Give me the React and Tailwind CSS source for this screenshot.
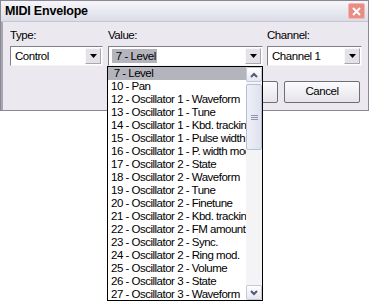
import React from 'react';

const items = [
    ' 7 - Level',
    '10 - Pan',
    '12 - Oscillator 1 - Waveform',
    '13 - Oscillator 1 - Tune',
    '14 - Oscillator 1 - Kbd. tracking',
    '15 - Oscillator 1 - Pulse width',
    '16 - Oscillator 1 - P. width mod',
    '17 - Oscillator 2 - State',
    '18 - Oscillator 2 - Waveform',
    '19 - Oscillator 2 - Tune',
    '20 - Oscillator 2 - Finetune',
    '21 - Oscillator 2 - Kbd. tracking',
    '22 - Oscillator 2 - FM amount',
    '23 - Oscillator 2 - Sync.',
    '24 - Oscillator 2 - Ring mod.',
    '25 - Oscillator 2 - Volume',
    '26 - Oscillator 3 - State',
    '27 - Oscillator 3 - Waveform',
];

const ArrowDown = () => (
    <svg width="7" height="4" viewBox="0 0 7 4">
        <path d="M0 0h7L3.5 4z" fill="#000" />
    </svg>
);

// sunken field: dark top/left edge, light bottom/right edge
const Combo = ({ width, value, selected }) => (
    <div className={`${width} h-[20px] bg-white border border-t-[#808088] border-l-[#808088] border-r-[#f4f4f6] border-b-[#f4f4f6] flex items-center p-[1px]`}>
        <div className="flex-1 h-full flex items-center pl-[2px]">
            <span className={`whitespace-pre px-[1px] leading-[14px] ${selected ? 'bg-[#b4b4bc]' : ''}`}>{value}</span>
        </div>
        <div className="w-[16px] h-full bg-[#e4e2e8] border border-[#f8f8fa] border-r-[#a9a7ae] border-b-[#a9a7ae] flex items-center justify-center">
            <ArrowDown />
        </div>
    </div>
);

const Button = ({ children, width }) => (
    <div className={`${width} h-[22px] border border-[#6e6e76] rounded-[2px] bg-gradient-to-b from-[#fbfbfd] to-[#e6e4ea] flex items-center justify-center`}>
        {children}
    </div>
);

const ScrollBtn = ({ up }) => (
    <div className="h-[15px] border border-[#c7cad6] rounded-[2px] bg-gradient-to-b from-[#ffffff] to-[#e6e6ee] flex items-center justify-center">
        <svg width="8" height="6" viewBox="0 0 8 6">
            <path d={up ? 'M1 5L4 2L7 5' : 'M1 1L4 4L7 1'} stroke="#4d5a78" strokeWidth="2" fill="none" />
        </svg>
    </div>
);

const App = () => {
    return (
        <div className="w-[369px] h-[303px] bg-white relative overflow-hidden text-[11.5px] tracking-[-0.45px] text-black" style={{ fontFamily: '"Liberation Sans", Arial, sans-serif' }}>
            {/* window */}
            <div className="w-[369px] h-[111px] border border-[#8a8894] bg-[#ebe8f0] flex flex-col">
                <div className="h-[21px] bg-gradient-to-b from-[#f6f6fa] to-[#dcdce8] flex items-center justify-between pl-[4px] pr-[3px] border-b border-[#c6c5d0]">
                    <span className="font-bold text-[12.5px] tracking-[-0.2px]">MIDI Envelope</span>
                    <div className="w-[17px] h-[16px] rounded-[2px] bg-[#e98c84] border border-[#f3b8b2] flex items-center justify-center">
                        <svg width="9" height="9" viewBox="0 0 9 9">
                            <path d="M1 1L8 8M8 1L1 8" stroke="#fff" strokeWidth="2" />
                        </svg>
                    </div>
                </div>
                <div className="flex-1 border-l-[2px] border-[#a7a6b0] pl-[7px] pr-[6px] pt-[6px]">
                    <div className="flex gap-[4px]">
                        <div className="flex flex-col gap-[4px]">
                            <span className="leading-[14px]">Type:</span>
                            <Combo width="w-[93px]" value="Control" />
                        </div>
                        <div className="flex flex-col gap-[4px] ml-[1px]">
                            <span className="leading-[14px]">Value:</span>
                            <Combo width="w-[155px]" value=" 7 - Level" selected />
                        </div>
                        <div className="flex flex-col gap-[4px]">
                            <span className="leading-[14px]">Channel:</span>
                            <Combo width="w-[95px]" value="Channel 1" />
                        </div>
                    </div>
                    <div className="flex justify-end gap-[6px] mt-[15px] pr-[2px]">
                        <Button width="w-[74px]">OK</Button>
                        <Button width="w-[76px]">Cancel</Button>
                    </div>
                </div>
            </div>

            {/* open dropdown list */}
            <div className="absolute left-[107px] top-[66px] w-[156px] h-[235px] bg-white border border-black flex tracking-[-0.5px]">
                <div className="flex-1 overflow-hidden">
                    {items.map((item, i) => (
                        <div key={i} className={`h-[13px] leading-[13px] whitespace-pre pl-[3px] ${i === 0 ? 'bg-[#b4b4bc]' : ''}`}>
                            {item}
                        </div>
                    ))}
                </div>
                <div className="w-[16px] bg-[#f4f3f6] flex flex-col">
                    <ScrollBtn up />
                    <div className="mt-[2px] h-[66px] border border-[#b8c0d6] rounded-[2px] bg-gradient-to-r from-[#eef0f8] to-[#dfe2ee] flex items-center justify-center">
                        <div className="flex flex-col gap-[1px]">
                            <div className="w-[7px] h-[1px] bg-[#8d95b0]" />
                            <div className="w-[7px] h-[1px] bg-[#8d95b0]" />
                            <div className="w-[7px] h-[1px] bg-[#8d95b0]" />
                        </div>
                    </div>
                    <div className="flex-1" />
                    <ScrollBtn />
                </div>
            </div>
        </div>
    );
};

export default App;
